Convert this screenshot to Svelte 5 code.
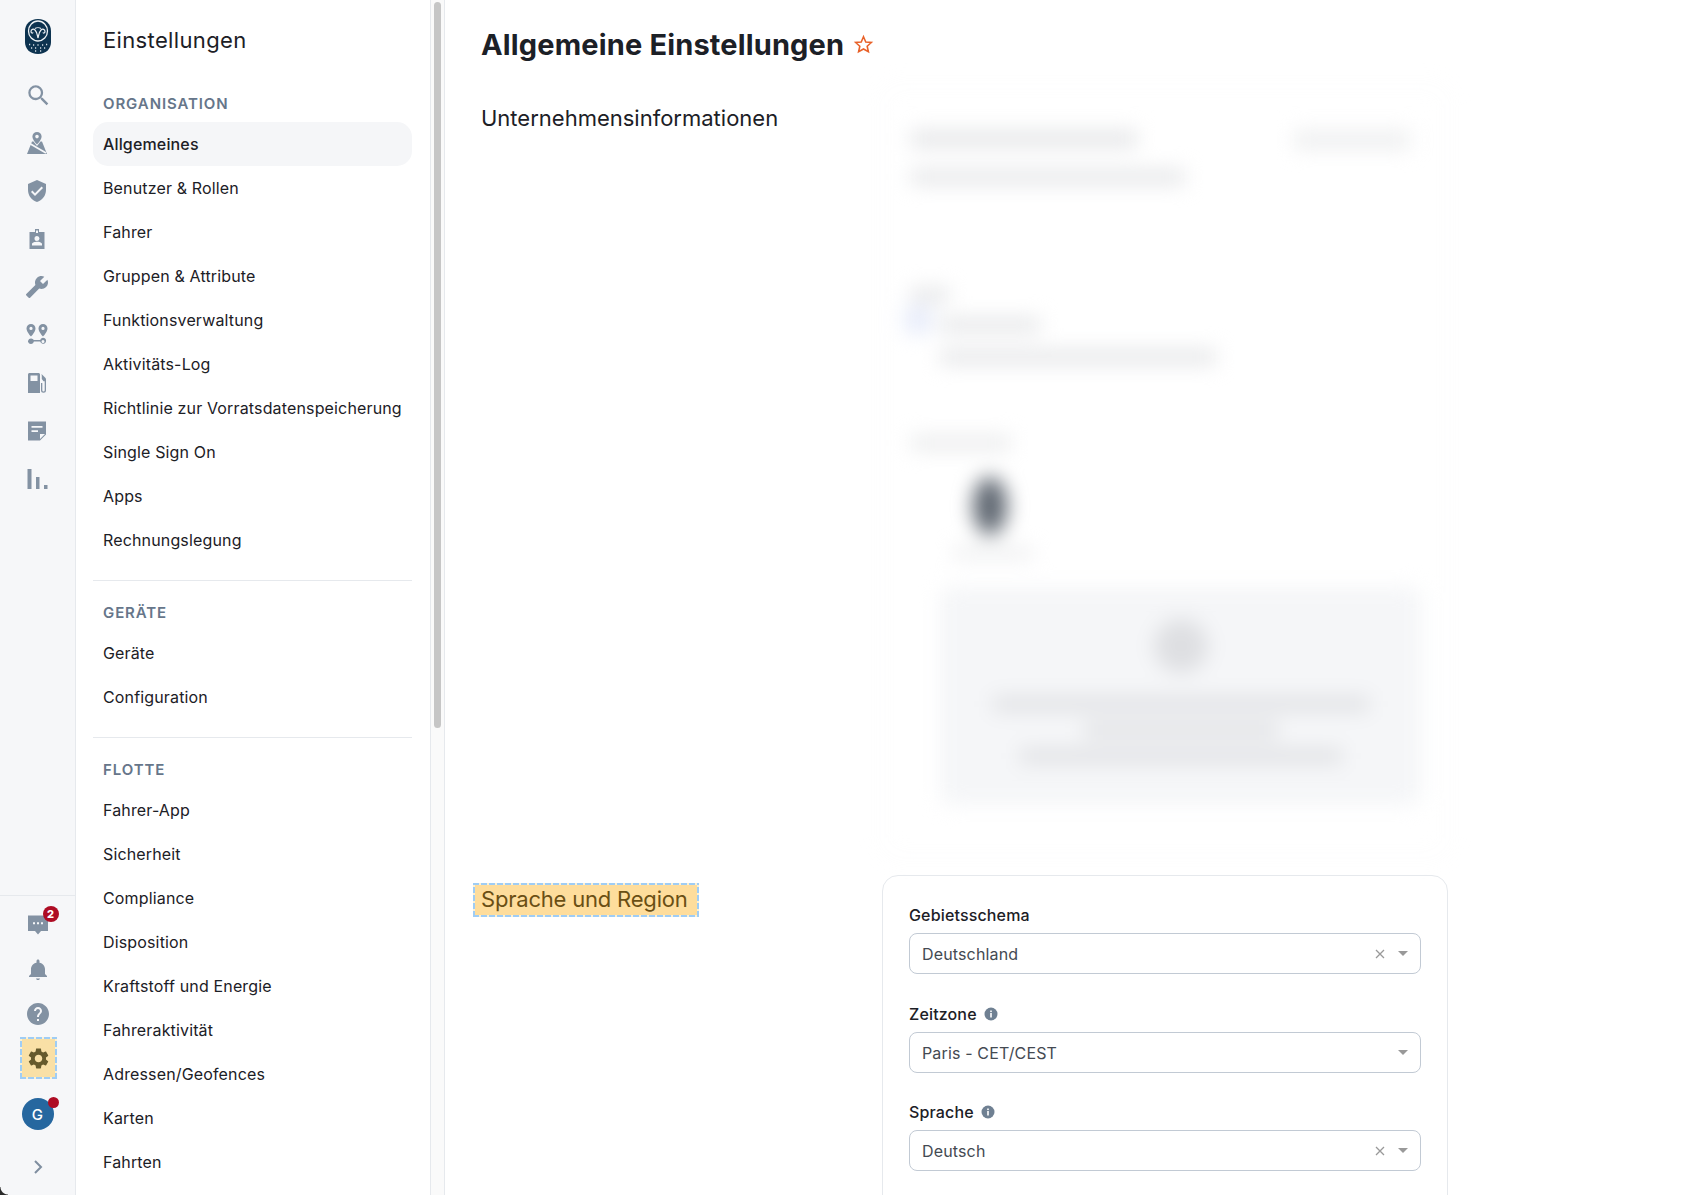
<script>
	const sections = [
		{
			title: 'Organisation',
			items: ['Allgemeines', 'Benutzer & Rollen', 'Fahrer', 'Gruppen & Attribute', 'Funktionsverwaltung', 'Aktivitäts-Log', 'Richtlinie zur Vorratsdatenspeicherung', 'Single Sign On', 'Apps', 'Rechnungslegung']
		},
		{ title: 'Geräte', items: ['Geräte', 'Configuration'] },
		{
			title: 'Flotte',
			items: ['Fahrer-App', 'Sicherheit', 'Compliance', 'Disposition', 'Kraftstoff und Energie', 'Fahreraktivität', 'Adressen/Geofences', 'Karten', 'Fahrten']
		}
	];

	const fields = [
		{ label: 'Gebietsschema', value: 'Deutschland', clear: true },
		{ label: 'Zeitzone', value: 'Paris - CET/CEST', info: true },
		{ label: 'Sprache', value: 'Deutsch', clear: true, info: true }
	];
</script>

<div class="app">
	<nav class="rail" aria-label="Hauptnavigation">
		<div class="rail-top">
			<svg class="logo" viewBox="0 0 26 35" aria-hidden="true">
				<path d="M13 0c8 0 13 5 13 12v11c0 7-5 12-13 12S0 30 0 23V12C0 5 5 0 13 0z" fill="#0d3350" />
				<ellipse cx="13" cy="12" rx="9.500" ry="10" fill="none" stroke="#eef2f5" stroke-width="1.300" />
				<path d="M13 19c-.8-3-1-6-3-8-1.600-1.600-4-.6-4 1.500 0 1.500 1.500 2 2.200 1M13 19c.8-3 1-6 3-8 1.600-1.600 4-.6 4 1.500 0 1.500-1.500 2-2.200 1M10 9.500c1.500-1 4.500-1 6 0" fill="none" stroke="#eef2f5" stroke-width="1.200" />
				<path d="M4 25.500h1.200M8 26h1.200M12.400 26h1.200M17 26h1.200M21 25.500h1.200M6 29h1.200M10 29h1.200M15 29h1.200M19 29h1.200M10 32h1.200M15 32h1.200" stroke="#d5dee5" stroke-width="1.300" />
			</svg>
			<svg class="ico search" viewBox="1 1 21 21" aria-hidden="true"><path d="M15.500 14h-.79l-.28-.27A6.471 6.471 0 0 0 16 9.500 6.500 6.500 0 1 0 9.500 16c1.610 0 3.090-.59 4.230-1.570l.27.28v.79l5 4.990L20.490 19l-4.990-5zm-6 0C7.010 14 5 11.990 5 9.500S7.010 5 9.500 5 14 7.010 14 9.500 11.990 14 9.500 14z" /></svg>
			<svg class="ico" viewBox="0 0 24 24" aria-hidden="true">
				<path d="M12 1a4.600 4.600 0 0 0-4.600 4.600c0 2.800 3 6.400 4.600 8 1.600-1.600 4.600-5.200 4.600-8A4.600 4.600 0 0 0 12 1zm0 6.400a1.800 1.800 0 1 1 0-3.600 1.800 1.800 0 0 1 0 3.600zM7 10.500h1.500l3.500 4.500 3.500-4.500H17l5 12.500H2z" fill-rule="evenodd" />
				<path d="M3 11.500 21 22" stroke="#f6f7f9" stroke-width="1.800" />
			</svg>
			<svg class="ico" viewBox="0 0 24 24" aria-hidden="true"><path d="M12 1 3 5v6c0 5.550 3.840 10.740 9 12 5.160-1.260 9-6.450 9-12V5l-9-4zm-2 16-4-4 1.410-1.410L10 14.170l6.590-6.590L18 9l-8 8z" /></svg>
			<svg class="ico" viewBox="0 0 24 24" aria-hidden="true"><path d="M10 2h4v3h5.500v17h-15V5H10zm1 1.500V6h2V3.500zM12 9a2.500 2.500 0 1 0 0 5 2.500 2.500 0 0 0 0-5zm-5 9.500h10V17c0-1.500-3-2.300-5-2.300S7 15.500 7 17z" fill-rule="evenodd" /></svg>
			<svg class="ico" viewBox="0 0 24 24" aria-hidden="true"><g transform="matrix(-1 0 0 1 24 0)"><path d="M22.700 19l-9.100-9.100c.9-2.300.4-5-1.500-6.900-2-2-5-2.400-7.400-1.300L9 6 6 9 1.600 4.700C.4 7.100.9 10.100 2.900 12.100c1.900 1.900 4.600 2.400 6.900 1.500l9.100 9.100c.4.4 1 .4 1.400 0l2.300-2.300c.5-.4.5-1.100.1-1.400z" /></g></svg>
			<svg class="ico" viewBox="0 0 24 24" aria-hidden="true"><path d="M6 1a4.500 4.500 0 0 0-4.500 4.500C1.500 9 6 13.500 6 13.500s4.500-4.500 4.500-8A4.500 4.500 0 0 0 6 1zm0 6a1.600 1.600 0 1 1 0-3.200A1.600 1.600 0 0 1 6 7zM18 1a4.500 4.500 0 0 0-4.500 4.500c0 3.500 4.500 8 4.500 8s4.500-4.500 4.500-8A4.500 4.500 0 0 0 18 1zm0 6a1.600 1.600 0 1 1 0-3.200A1.600 1.600 0 0 1 18 7zM6 15.500a3 3 0 0 0-2.900 2.200H3V19h.1a3 3 0 0 0 5.800-.5h6.300a3 3 0 1 0 0-1.500H8.800A3 3 0 0 0 6 15.500zm12 1.400a1.500 1.500 0 1 1 0 3 1.500 1.500 0 0 1 0-3z" fill-rule="evenodd" /></svg>
			<svg class="ico" viewBox="0 0 24 24" aria-hidden="true"><path d="M4.500 2h9c.8 0 1.500.7 1.500 1.500V22H3V3.500C3 2.700 3.700 2 4.500 2zM5.500 4.500V10h7V4.500zM16.500 3l3.800 3.800c.5.500.7 1.100.7 1.700v10.700a2.500 2.500 0 0 1-5 0V12h1.300v7.200a1.200 1.200 0 0 0 2.400 0v-9h-1.200L16.800 8V5z" fill-rule="evenodd" /></svg>
			<svg class="ico" viewBox="0 0 24 24" aria-hidden="true"><path d="M3 2.500h18v13l-6 6H3zM6.500 7v1.800h11V7zm0 4.200V13H13v-1.800zM15 20l5-5h-5z" fill-rule="evenodd" /></svg>
			<svg class="ico" viewBox="0 0 24 24" aria-hidden="true"><path d="M2.500 2h4v20h-4zM11 10h3.500v12H11zM19 18h3.500v4H19z" /></svg>
		</div>

		<div class="rail-bottom">
			<div class="chat">
				<svg class="ico" viewBox="0 0 24 24" aria-hidden="true"><path d="M2 3.500h20V19h-7l-3 3.500L9 19H2zM7 10.200v2h2v-2zm4 0v2h2v-2zm4 0v2h2v-2z" fill-rule="evenodd" /></svg>
				<span class="count">2</span>
			</div>
			<svg class="ico" viewBox="0 0 24 24" aria-hidden="true"><path d="M12 23c1.100 0 2-.7 2-1.500h-4c0 .8.890 1.500 2 1.500zm7-6v-5c0-3.070-2.140-5.640-5.500-6.320V4c0-.83-.67-1.500-1.500-1.500s-1.500.67-1.500 1.500v1.680C7.130 6.360 5 8.920 5 12v5l-2 2v1h18v-1l-2-2z" /></svg>
			<svg class="ico help" viewBox="0 0 24 24" aria-hidden="true"><path d="M12 1C5.930 1 1 5.930 1 12s4.930 11 11 11 11-4.930 11-11S18.070 1 12 1zm1 18h-2v-2h2v2zm2.070-7.750-.9.920C13.450 12.900 13 13.500 13 15h-2v-.5c0-1.100.45-2.100 1.170-2.830l1.240-1.260c.37-.36.59-.86.59-1.410 0-1.100-.9-2-2-2s-2 .9-2 2H8c0-2.210 1.790-4 4-4s4 1.790 4 4c0 .88-.36 1.680-.93 2.250z" /></svg>
			<div class="gear-box">
				<svg viewBox="0 0 24 24" aria-hidden="true"><path d="M19.140 12.940c.04-.3.06-.61.06-.94 0-.32-.02-.64-.07-.94l2.030-1.580c.18-.14.23-.41.12-.61l-1.920-3.320c-.12-.22-.37-.29-.59-.22l-2.390.96c-.5-.38-1.030-.7-1.620-.94l-.36-2.540c-.04-.24-.24-.41-.48-.41h-3.840c-.24 0-.43.17-.47.41l-.36 2.540c-.59.24-1.130.57-1.620.94l-2.390-.96c-.22-.08-.47 0-.59.22L2.740 8.870c-.12.21-.08.47.12.61l2.030 1.580c-.05.3-.09.63-.09.94s.02.64.07.94l-2.030 1.580c-.18.14-.23.41-.12.61l1.920 3.320c.12.22.37.29.59.22l2.390-.96c.5.38 1.030.7 1.620.94l.36 2.540c.05.24.24.41.48.41h3.840c.24 0 .44-.17.47-.41l.36-2.540c.59-.24 1.130-.56 1.620-.94l2.390.96c.22.08.47 0 .59-.22l1.920-3.320c.12-.22.07-.47-.12-.61l-2.010-1.580zM12 15.600c-1.980 0-3.600-1.620-3.600-3.600s1.620-3.600 3.600-3.600 3.600 1.620 3.600 3.600-1.620 3.600-3.600 3.600z" /></svg>
			</div>
			<div class="avatar">G<span class="dot"></span></div>
			<svg class="chevron" viewBox="0 0 10 16" aria-hidden="true"><path d="M2 2l6 6-6 6" /></svg>
		</div>
		<span class="corner"></span>
	</nav>

	<aside class="panel">
		<h2>Einstellungen</h2>
		{#each sections as section, i}
			{#if i > 0}<hr />{/if}
			<h3>{section.title}</h3>
			<ul>
				{#each section.items as item}
					<li class:active={item === 'Allgemeines'}>{item}</li>
				{/each}
			</ul>
		{/each}
	</aside>

	<div class="scrollbar"><div class="thumb"></div></div>

	<main>
		<header>
			<h1>Allgemeine Einstellungen</h1>
			<svg class="star" viewBox="0 0 24 24" aria-hidden="true"><path d="M12 3.200l2.600 5.900 6.400.6-4.800 4.300 1.400 6.300L12 17.100l-5.600 3.200 1.400-6.300L3 9.700l6.400-.6z" /></svg>
		</header>

		<section class="row first">
			<h4>Unternehmensinformationen</h4>
			<div class="card blurred" aria-hidden="true">
				<div class="head">
					<div>
						<div class="bar b1"></div>
						<div class="bar b2"></div>
					</div>
					<div class="bar btn"></div>
				</div>
				<div class="address">
					<div class="bar lab"></div>
					<div class="addr-row">
						<span class="sq"></span>
						<div>
							<div class="bar b3"></div>
							<div class="bar b4"></div>
						</div>
					</div>
				</div>
				<div class="bar lab2"></div>
				<div class="oval"></div>
				<div class="bar b5"></div>
				<div class="drop">
					<span class="circle"></span>
					<div class="bar l1"></div>
					<div class="bar l2"></div>
					<div class="bar l3"></div>
				</div>
			</div>
		</section>

		<section class="row">
			<h4 class="highlight">Sprache und Region</h4>
			<div class="card form">
				{#each fields as field}
					<div class="field">
						<div class="label">
							{field.label}
							{#if field.info}
								<svg viewBox="0 0 14 14" aria-hidden="true"><circle cx="7" cy="7" r="6.500" fill="#6f8092" /><rect x="6.200" y="6" width="1.600" height="4.500" fill="#fff" /><rect x="6.200" y="3.500" width="1.600" height="1.600" fill="#fff" /></svg>
							{/if}
						</div>
						<div class="select">
							<span>{field.value}</span>
							{#if field.clear}
								<svg class="clear" viewBox="0 0 10 10" aria-hidden="true"><path d="M1 1l8 8M9 1L1 9" /></svg>
							{/if}
							<i class="caret"></i>
						</div>
					</div>
				{/each}
			</div>
		</section>
	</main>
</div>

<style>
	:global(body) {
		margin: 0;
		background: #fff;
	}

	.app {
		display: flex;
		height: 1195px;
		overflow: hidden;
		color: #1c2026;
		font-family: Inter, 'Liberation Sans', sans-serif;
		letter-spacing: 0.15px;
	}

	.rail {
		position: relative;
		flex: 0 0 76px;
		box-sizing: border-box;
		display: flex;
		flex-direction: column;
		justify-content: space-between;
		border-right: 1px solid #e6e9ed;
		background: #f6f7f9;
	}

	.corner {
		position: absolute;
		left: 0;
		bottom: 0;
		width: 8px;
		height: 8px;
		background: radial-gradient(circle at 100% 0, transparent 7px, #2a2a2a 8px);
	}

	.rail-top {
		display: flex;
		flex-direction: column;
		align-items: center;
		gap: 24px;
		padding: 19px 2px 0 0;
	}

	.logo {
		width: 26px;
		height: 35px;
		margin: 0 0 5px 2px;
	}

	.ico {
		display: block;
		width: 24px;
		height: 24px;
		fill: #8392a3;
	}

	.search {
		margin-left: 3px;
	}

	.rail-bottom {
		display: flex;
		flex-direction: column;
		align-items: center;
		border-top: 1px solid #e6e9ed;
		padding-top: 16px;
		height: 300px;
		box-sizing: border-box;
		gap: 21px;
	}

	.chat {
		position: relative;
		height: 24px;
	}

	.count {
		position: absolute;
		top: -6px;
		left: 17px;
		width: 16px;
		height: 16px;
		border-radius: 50%;
		background: #ae0c24;
		color: #fff;
		font-size: 11px;
		font-weight: 800;
		line-height: 16px;
		text-align: center;
		letter-spacing: 0;
	}

	.gear-box {
		display: grid;
		place-items: center;
		width: 37px;
		height: 42px;
		margin: -10px 0 0 1px;
		background:
			repeating-linear-gradient(90deg, #9fcdf5 0 6px, #fdf1d2 6px 8px) top / 100% 2px no-repeat,
			repeating-linear-gradient(90deg, #9fcdf5 0 6px, #fdf1d2 6px 8px) bottom / 100% 2px no-repeat,
			repeating-linear-gradient(0deg, #9fcdf5 0 6px, #fdf1d2 6px 8px) left / 2px 100% no-repeat,
			repeating-linear-gradient(0deg, #9fcdf5 0 6px, #fdf1d2 6px 8px) right / 2px 100% no-repeat,
			#f9e0a6;
	}

	.gear-box svg {
		width: 25px;
		height: 25px;
		fill: #665a2c;
	}

	.avatar {
		position: relative;
		display: grid;
		place-items: center;
		width: 32px;
		height: 32px;
		margin-top: -2px;
		border-radius: 50%;
		background: #26679f;
		color: #fff;
		font-size: 15px;
		font-weight: 500;
	}

	.dot {
		position: absolute;
		top: -1px;
		right: -5px;
		width: 11px;
		height: 11px;
		border-radius: 50%;
		background: #ae0c24;
	}

	.chevron {
		width: 10px;
		height: 16px;
		margin-top: 8px;
		fill: none;
		stroke: #7f8ea0;
		stroke-width: 2;
	}

	.panel {
		flex: 0 0 354px;
		box-sizing: border-box;
		padding: 24px 18px 0 17px;
		overflow: hidden;
		background: #fff;
	}

	.panel h2 {
		margin: 0 0 38px 10px;
		font-size: 22px;
		font-weight: 400;
		letter-spacing: 0.35px;
		line-height: 32px;
	}

	.panel h3 {
		margin: 0 0 8px 10px;
		color: #66768a;
		font-size: 15px;
		font-weight: 600;
		letter-spacing: 0.9px;
		line-height: 20px;
		text-transform: uppercase;
	}

	.panel ul {
		margin: 0;
		padding: 0;
		list-style: none;
	}

	.panel li {
		height: 44px;
		padding: 0 10px;
		font-size: 16px;
		line-height: 44px;
		white-space: nowrap;
	}

	.panel li.active {
		border-radius: 15px;
		background: #f5f6f8;
		font-weight: 500;
	}

	.panel hr {
		height: 1px;
		margin: 18px 0 22px;
		border: 0;
		background: #e6e9ed;
	}

	.scrollbar {
		flex: 0 0 15px;
		box-sizing: border-box;
		border-left: 1px solid #e6e9ed;
		border-right: 1px solid #e6e9ed;
		background: #fafafa;
		padding: 2px 3px;
	}

	.thumb {
		width: 7px;
		height: 726px;
		border-radius: 4px;
		background: #c6c6c6;
	}

	main {
		flex: 1;
		min-width: 0;
		padding: 0 0 0 36px;
	}

	header {
		display: flex;
		align-items: center;
		gap: 9px;
		height: 89px;
	}

	h1 {
		margin: 0;
		font-size: 29px;
		font-weight: 700;
		line-height: 36px;
	}

	.star {
		width: 21px;
		height: 21px;
		fill: none;
		stroke: #e8622a;
		stroke-width: 1.800;
	}

	.row {
		display: grid;
		grid-template-columns: 401px 566px;
		align-items: start;
	}

	.row.first {
		min-height: 786px;
	}

	h4 {
		margin: 0;
		font-size: 22px;
		font-weight: 400;
		letter-spacing: 0;
		line-height: 34px;
	}

	.row.first h4 {
		margin-top: 12px;
	}

	.highlight {
		justify-self: start;
		margin: 8px 0 0 -8px;
		padding: 1px 11px 3px 8px;
		background:
			repeating-linear-gradient(90deg, #9fcdf5 0 6px, #fdf1d2 6px 8px) top / 100% 2px no-repeat,
			repeating-linear-gradient(90deg, #9fcdf5 0 6px, #fdf1d2 6px 8px) bottom / 100% 2px no-repeat,
			repeating-linear-gradient(0deg, #9fcdf5 0 6px, #fdf1d2 6px 8px) left / 2px 100% no-repeat,
			repeating-linear-gradient(0deg, #9fcdf5 0 6px, #fdf1d2 6px 8px) right / 2px 100% no-repeat,
			#fedd9c;
		color: #6a4f14;
		letter-spacing: -0.2px;
		line-height: 30px;
	}

	.card {
		border: 1px solid #e6e9ed;
		border-radius: 16px;
		box-sizing: border-box;
	}

	.blurred {
		height: 770px;
		margin-top: -3px;
		padding: 44px 37px 0 28px;
		border-color: #f2f3f5;
		filter: blur(10px);
	}

	.head {
		display: flex;
		justify-content: space-between;
		align-items: flex-start;
	}

	.bar {
		height: 14px;
		background: #e4e5e7;
	}

	.b1 {
		width: 226px;
		height: 16px;
	}

	.b2 {
		width: 274px;
		margin-top: 23px;
	}

	.btn {
		width: 116px;
		height: 18px;
		background: #eeeff0;
	}

	.address {
		margin-top: 104px;
	}

	.lab {
		width: 38px;
	}

	.addr-row {
		display: flex;
		gap: 9px;
		margin-top: 16px;
		margin-left: -6px;
	}

	.sq {
		flex: none;
		width: 26px;
		height: 26px;
		margin-top: -11px;
		background: #e6ebfa;
	}

	.b3 {
		width: 100px;
	}

	.b4 {
		width: 276px;
		margin-top: 18px;
	}

	.lab2 {
		width: 100px;
		margin-top: 72px;
		background: #eaebec;
	}

	.oval {
		width: 34px;
		height: 58px;
		margin: 27px 0 0 62px;
		border-radius: 50%;
		background: #5f6771;
	}

	.b5 {
		width: 80px;
		height: 8px;
		margin: 14px 0 0 42px;
		background: #e6e7e9;
	}

	.drop {
		display: flex;
		flex-direction: column;
		align-items: center;
		height: 218px;
		margin: 30px -11px 0 29px;
		padding-top: 32px;
		box-sizing: border-box;
		border-radius: 12px;
		background: #f5f6f8;
	}

	.circle {
		width: 54px;
		height: 54px;
		border-radius: 50%;
		background: #dedfe2;
	}

	.l1 {
		width: 376px;
		margin-top: 24px;
		background: #dfe0e3;
	}

	.l2 {
		width: 194px;
		margin-top: 12px;
		background: #dfe0e3;
	}

	.l3 {
		width: 322px;
		margin-top: 12px;
		background: #dfe0e3;
	}

	.form {
		padding: 25px 26px 0;
		height: 400px;
		border-radius: 16px;
	}

	.field + .field {
		margin-top: 26px;
	}

	.field:last-child {
		margin-top: 25px;
	}

	.label {
		display: flex;
		align-items: center;
		gap: 7px;
		height: 27px;
		margin-bottom: 5px;
		font-size: 16px;
		font-weight: 500;
	}

	.label svg {
		width: 14px;
		height: 14px;
	}

	.select {
		display: flex;
		align-items: center;
		height: 41px;
		padding: 0 12px;
		box-sizing: border-box;
		border: 1px solid #c2cad4;
		border-radius: 8px;
		color: #444a52;
		font-size: 16px;
	}

	.select span {
		flex: 1;
	}

	.clear {
		width: 10px;
		height: 10px;
		margin-right: 13px;
		fill: none;
		stroke: #999;
		stroke-width: 1.300;
	}

	.caret {
		width: 0;
		height: 0;
		margin-right: 0;
		border-left: 5px solid transparent;
		border-right: 5px solid transparent;
		border-top: 5px solid #999;
	}
</style>
